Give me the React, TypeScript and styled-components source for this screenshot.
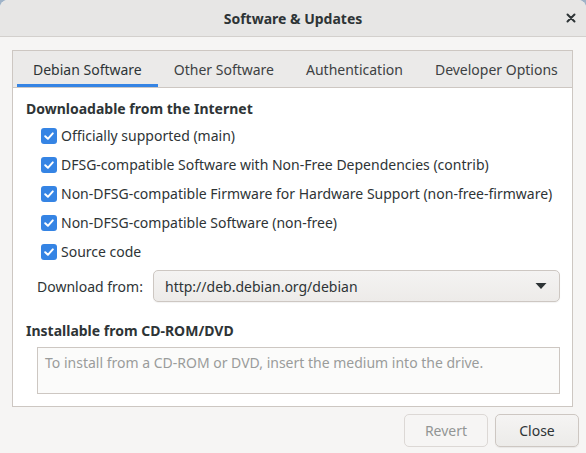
import React from 'react'
import styled, { createGlobalStyle } from 'styled-components'

const GlobalStyle = createGlobalStyle`
  html, body {
    margin: 0;
    padding: 0;
    background: #9fb3c8;
  }
  body {
    font-family: "Noto Sans", "Open Sans", sans-serif;
    font-size: 14px;
    color: #2e3436;
  }
`

const BLUE = '#3584e4'
const BORDER = '#cdc7c2'

const Window = styled.div`
  width: 586px;
  height: 453px;
  display: flex;
  flex-direction: column;
  background: #f6f5f4;
  border-radius: 8px 8px 0 0;
  overflow: hidden;
`

const TitleBar = styled.div`
  height: 36px;
  flex: none;
  display: flex;
  align-items: center;
  justify-content: center;
  position: relative;
  background: #e7e6e5;
  border-bottom: 1px solid #d3d0cd;
  font-weight: 700;
  font-size: 14px;
  color: #2e3436;
`

const CloseX = styled.button`
  position: absolute;
  right: 6px;
  top: 9px;
  width: 18px;
  height: 18px;
  border: none;
  background: transparent;
  padding: 0;
  display: flex;
  align-items: center;
  justify-content: center;
`

const Body = styled.div`
  flex: 1;
  display: flex;
  flex-direction: column;
  padding: 13px 13px 0 12px;
`

const Notebook = styled.div`
  height: 355px;
  flex: none;
  display: flex;
  flex-direction: column;
  border: 1px solid ${BORDER};
  background: #fff;
`

const TabBar = styled.div`
  height: 36px;
  flex: none;
  display: flex;
  padding-left: 4px;
  background: #ebeae9;
  border-bottom: 1px solid ${BORDER};
`

const Tab = styled.div<{ $active?: boolean }>`
  display: flex;
  align-items: center;
  padding: 0 16px;
  white-space: nowrap;
  color: ${p => (p.$active ? '#2e3436' : '#3d4143')};
  box-shadow: ${p => (p.$active ? `inset 0 -3px 0 ${BLUE}` : 'none')};
`

const Page = styled.div`
  flex: 1;
  display: flex;
  flex-direction: column;
  padding: 11px 12px 0 13px;
`

const Heading = styled.div`
  font-weight: 700;
  line-height: 20px;
`

const CheckList = styled.div`
  display: flex;
  flex-direction: column;
  padding: 2px 0 0 15px;
`

const CheckRow = styled.label`
  height: 29px;
  display: flex;
  align-items: center;
  gap: 4px;
  white-space: nowrap;
`

const Box = styled.span`
  width: 16px;
  height: 16px;
  border-radius: 3px;
  background: ${BLUE};
  display: flex;
  align-items: center;
  justify-content: center;
  flex: none;
`

const SourceRow = styled.div`
  display: flex;
  align-items: center;
  padding: 4px 0 0 11px;
`

const SourceLabel = styled.span`
  width: 116px;
  white-space: nowrap;
`

const Combo = styled.div`
  flex: 1;
  height: 32px;
  box-sizing: border-box;
  display: flex;
  align-items: center;
  justify-content: space-between;
  padding: 0 12px 0 11px;
  border: 1px solid ${BORDER};
  border-radius: 5px;
  background: linear-gradient(#f4f3f2, #edebe9);
  box-shadow: 0 1px 1px rgba(0, 0, 0, 0.05);
`

const CdHeading = styled(Heading)`
  margin-top: 19px;
`

const CdBox = styled.div`
  margin: 6px 0 0 11px;
  height: 47px;
  box-sizing: border-box;
  border: 1px solid ${BORDER};
  background: #fbfbfa;
  padding: 5px 7px;
  color: #9a9c9b;
  white-space: nowrap;
`

const ButtonRow = styled.div`
  display: flex;
  justify-content: flex-end;
  gap: 7px;
  padding-top: 7px;
  margin-right: -6px;
`

const Button = styled.button<{ $disabled?: boolean }>`
  width: 84px;
  height: 33px;
  font-family: inherit;
  font-size: 14px;
  border: 1px solid ${p => (p.$disabled ? '#dcd8d5' : BORDER)};
  border-radius: 5px;
  background: ${p => (p.$disabled ? '#f6f5f4' : 'linear-gradient(#f5f4f3, #ecebe9)')};
  color: ${p => (p.$disabled ? '#929595' : '#2e3436')};
  box-shadow: ${p => (p.$disabled ? 'none' : '0 1px 1px rgba(0,0,0,0.06)')};
`

const items = [
  'Officially supported (main)',
  'DFSG-compatible Software with Non-Free Dependencies (contrib)',
  'Non-DFSG-compatible Firmware for Hardware Support (non-free-firmware)',
  'Non-DFSG-compatible Software (non-free)',
  'Source code',
]

const Check = () => (
  <Box>
    <svg width="12" height="12" viewBox="0 0 12 12">
      <path d="M2.2 6.3 L4.9 8.8 L9.8 3.4" fill="none" stroke="#fff" strokeWidth="2" strokeLinecap="round" strokeLinejoin="round" />
    </svg>
  </Box>
)

export default function App() {
  return (
    <>
      <GlobalStyle />
      <Window>
        <TitleBar>
          Software &amp; Updates
          <CloseX>
            <svg width="10" height="10" viewBox="0 0 10 10">
              <path d="M1.5 1.5 L8.5 8.5 M8.5 1.5 L1.5 8.5" stroke="#2e3436" strokeWidth="2" strokeLinecap="round" />
            </svg>
          </CloseX>
        </TitleBar>
        <Body>
          <Notebook>
            <TabBar>
              <Tab $active>Debian Software</Tab>
              <Tab>Other Software</Tab>
              <Tab>Authentication</Tab>
              <Tab>Developer Options</Tab>
            </TabBar>
            <Page>
              <Heading>Downloadable from the Internet</Heading>
              <CheckList>
                {items.map(text => (
                  <CheckRow key={text}>
                    <Check />
                    {text}
                  </CheckRow>
                ))}
              </CheckList>
              <SourceRow>
                <SourceLabel>Download from:</SourceLabel>
                <Combo>
                  http://deb.debian.org/debian
                  <svg width="12" height="8" viewBox="0 0 12 8">
                    <path d="M0.5 1 L11.5 1 L6 7 Z" fill="#2e3436" />
                  </svg>
                </Combo>
              </SourceRow>
              <CdHeading>Installable from CD-ROM/DVD</CdHeading>
              <CdBox>To install from a CD-ROM or DVD, insert the medium into the drive.</CdBox>
            </Page>
          </Notebook>
          <ButtonRow>
            <Button $disabled>Revert</Button>
            <Button>Close</Button>
          </ButtonRow>
        </Body>
      </Window>
    </>
  )
}
